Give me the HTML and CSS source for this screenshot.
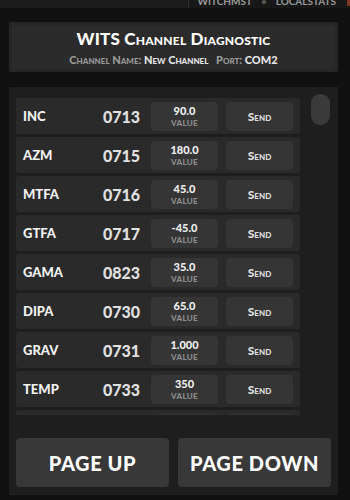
FILE: index.html
```html
<!DOCTYPE html>
<html lang="en">
<head>
    <meta charset="UTF-8">
    <meta name="viewport" content="width=device-width, initial-scale=1.0">
    <title>WITS Channel Diagnostic</title>
    <link rel="stylesheet" href="styles.css">
</head>
<body>
    <div class="topbar">
        <div class="topbar-left"></div>
        <div class="topbar-right"><span>WITCHMST</span><span class="dot">•</span><span>LOCALSTATS</span><span class="flag"></span></div>
    </div>

    <div class="header">
        <div class="header-inner">
            <div class="title">WITS Channel Diagnostic</div>
            <div class="subtitle">
                <span class="lbl">Channel Name:</span> <span class="val">New Channel</span>
                <span class="lbl port">Port:</span> <span class="val">COM2</span>
            </div>
        </div>
    </div>

    <div class="panel">
        <div class="viewport">
            <div class="list">
                <div class="row">
                    <div class="name">INC</div>
                    <div class="code">0713</div>
                    <div class="value"><span class="num">90.0</span><span class="cap">VALUE</span></div>
                    <div class="send">Send</div>
                </div>
                <div class="row">
                    <div class="name">AZM</div>
                    <div class="code">0715</div>
                    <div class="value"><span class="num">180.0</span><span class="cap">VALUE</span></div>
                    <div class="send">Send</div>
                </div>
                <div class="row">
                    <div class="name">MTFA</div>
                    <div class="code">0716</div>
                    <div class="value"><span class="num">45.0</span><span class="cap">VALUE</span></div>
                    <div class="send">Send</div>
                </div>
                <div class="row">
                    <div class="name">GTFA</div>
                    <div class="code">0717</div>
                    <div class="value"><span class="num">-45.0</span><span class="cap">VALUE</span></div>
                    <div class="send">Send</div>
                </div>
                <div class="row">
                    <div class="name">GAMA</div>
                    <div class="code">0823</div>
                    <div class="value"><span class="num">35.0</span><span class="cap">VALUE</span></div>
                    <div class="send">Send</div>
                </div>
                <div class="row">
                    <div class="name">DIPA</div>
                    <div class="code">0730</div>
                    <div class="value"><span class="num">65.0</span><span class="cap">VALUE</span></div>
                    <div class="send">Send</div>
                </div>
                <div class="row">
                    <div class="name">GRAV</div>
                    <div class="code">0731</div>
                    <div class="value"><span class="num">1.000</span><span class="cap">VALUE</span></div>
                    <div class="send">Send</div>
                </div>
                <div class="row">
                    <div class="name">TEMP</div>
                    <div class="code">0733</div>
                    <div class="value"><span class="num">350</span><span class="cap">VALUE</span></div>
                    <div class="send">Send</div>
                </div>
                <div class="row">
                    <div class="name">BATV</div>
                    <div class="code">0734</div>
                    <div class="value"><span class="num">28.0</span><span class="cap">VALUE</span></div>
                    <div class="send">Send</div>
                </div>
            </div>
            <div class="scrollbar"><div class="thumb"></div></div>
        </div>

        <div class="pager">
            <button class="page-btn">PAGE UP</button>
            <button class="page-btn">PAGE DOWN</button>
        </div>
    </div>
</body>
</html>
```

FILE: styles.css
```css
body {
    margin: 0;
    background: #111111;
    font-family: Lato, "Open Sans", sans-serif;
    color: #ffffff;
}
.topbar {
    display: flex;
    height: 8px;
    overflow: hidden;
}
.topbar-left {
    width: 197px;
    background: #1c1c1c;
    border-right: 1px solid #2c2c2c;
}
.topbar-right {
    flex: 1;
    background: #181818;
    display: flex;
    align-items: flex-start;
    gap: 9px;
    padding-left: 8px;
    font-size: 10px;
    font-weight: 700;
    color: #9a9a9a;
    line-height: 10px;
    margin-top: -4px;
}
.topbar-right .dot {
    color: #555555;
}
.topbar-right .flag {
    width: 3px;
    height: 10px;
    background: #7a3a22;
    margin-left: 2px;
}
.header {
    margin: 14px 12px 0 9px;
    height: 50px;
    background: #262626;
    padding: 3px;
    box-sizing: border-box;
    border-radius: 2px;
}
.header-inner {
    height: 100%;
    background: #2b2b2b;
    border-radius: 3px;
    display: flex;
    flex-direction: column;
    align-items: center;
    justify-content: center;
    gap: 6px;
    padding-top: 1px;
    box-sizing: border-box;
}
.title {
    font-size: 17px;
    font-weight: 900;
    font-variant: small-caps;
    letter-spacing: 0.2px;
    line-height: 18px;
}
.subtitle {
    font-size: 11px;
    font-weight: 900;
    font-variant: small-caps;
    line-height: 12px;
}
.subtitle .lbl {
    color: #9a9a9a;
}
.subtitle .port {
    margin-left: 5px;
}
.subtitle .val {
    color: #e6e6e6;
}
.panel {
    margin: 15px 12px 0 9px;
    height: 408px;
    background: #1e1e1e;
    padding: 7px 7px 8px 7px;
    box-sizing: border-box;
    display: flex;
    flex-direction: column;
}
.viewport {
    display: flex;
    height: 321px;
    gap: 11px;
}
.list {
    width: 284px;
    overflow: hidden;
    padding-top: 4px;
    display: flex;
    flex-direction: column;
    gap: 3px;
}
.row {
    flex: none;
    height: 36px;
    background: #2a2a2a;
    border-radius: 3px;
    display: flex;
    align-items: center;
    padding: 0 7px;
}
.name {
    flex: 1;
    font-size: 13px;
    font-weight: 900;
    color: #f2f2f2;
}
.code {
    font-size: 16px;
    font-weight: 900;
    color: #e0e0e0;
    margin-right: 11px;
}
.value, .send {
    width: 67px;
    height: 29px;
    background: #353535;
    border-radius: 4px;
}
.value {
    display: flex;
    flex-direction: column;
    align-items: center;
    justify-content: center;
}
.value .num {
    font-size: 11px;
    font-weight: 900;
    color: #eeeeee;
    line-height: 13px;
}
.value .cap {
    font-size: 8px;
    font-weight: 900;
    letter-spacing: 0.3px;
    color: #8e8e8e;
    line-height: 12px;
}
.send {
    margin-left: 8px;
    display: flex;
    align-items: center;
    justify-content: center;
    font-size: 12px;
    font-weight: 900;
    font-variant: small-caps;
    color: #dddddd;
}
.scrollbar {
    width: 19px;
}
.thumb {
    height: 31px;
    background: #3a3a3a;
    border-radius: 9px;
}
.pager {
    margin-top: auto;
    display: flex;
    gap: 9px;
}
.page-btn {
    flex: 1;
    height: 49px;
    border: none;
    border-radius: 4px;
    background: #383838;
    color: #ffffff;
    font-family: Lato, "Open Sans", sans-serif;
    font-size: 20px;
    font-weight: 900;
    letter-spacing: 0.6px;
    padding: 0;
}
```
